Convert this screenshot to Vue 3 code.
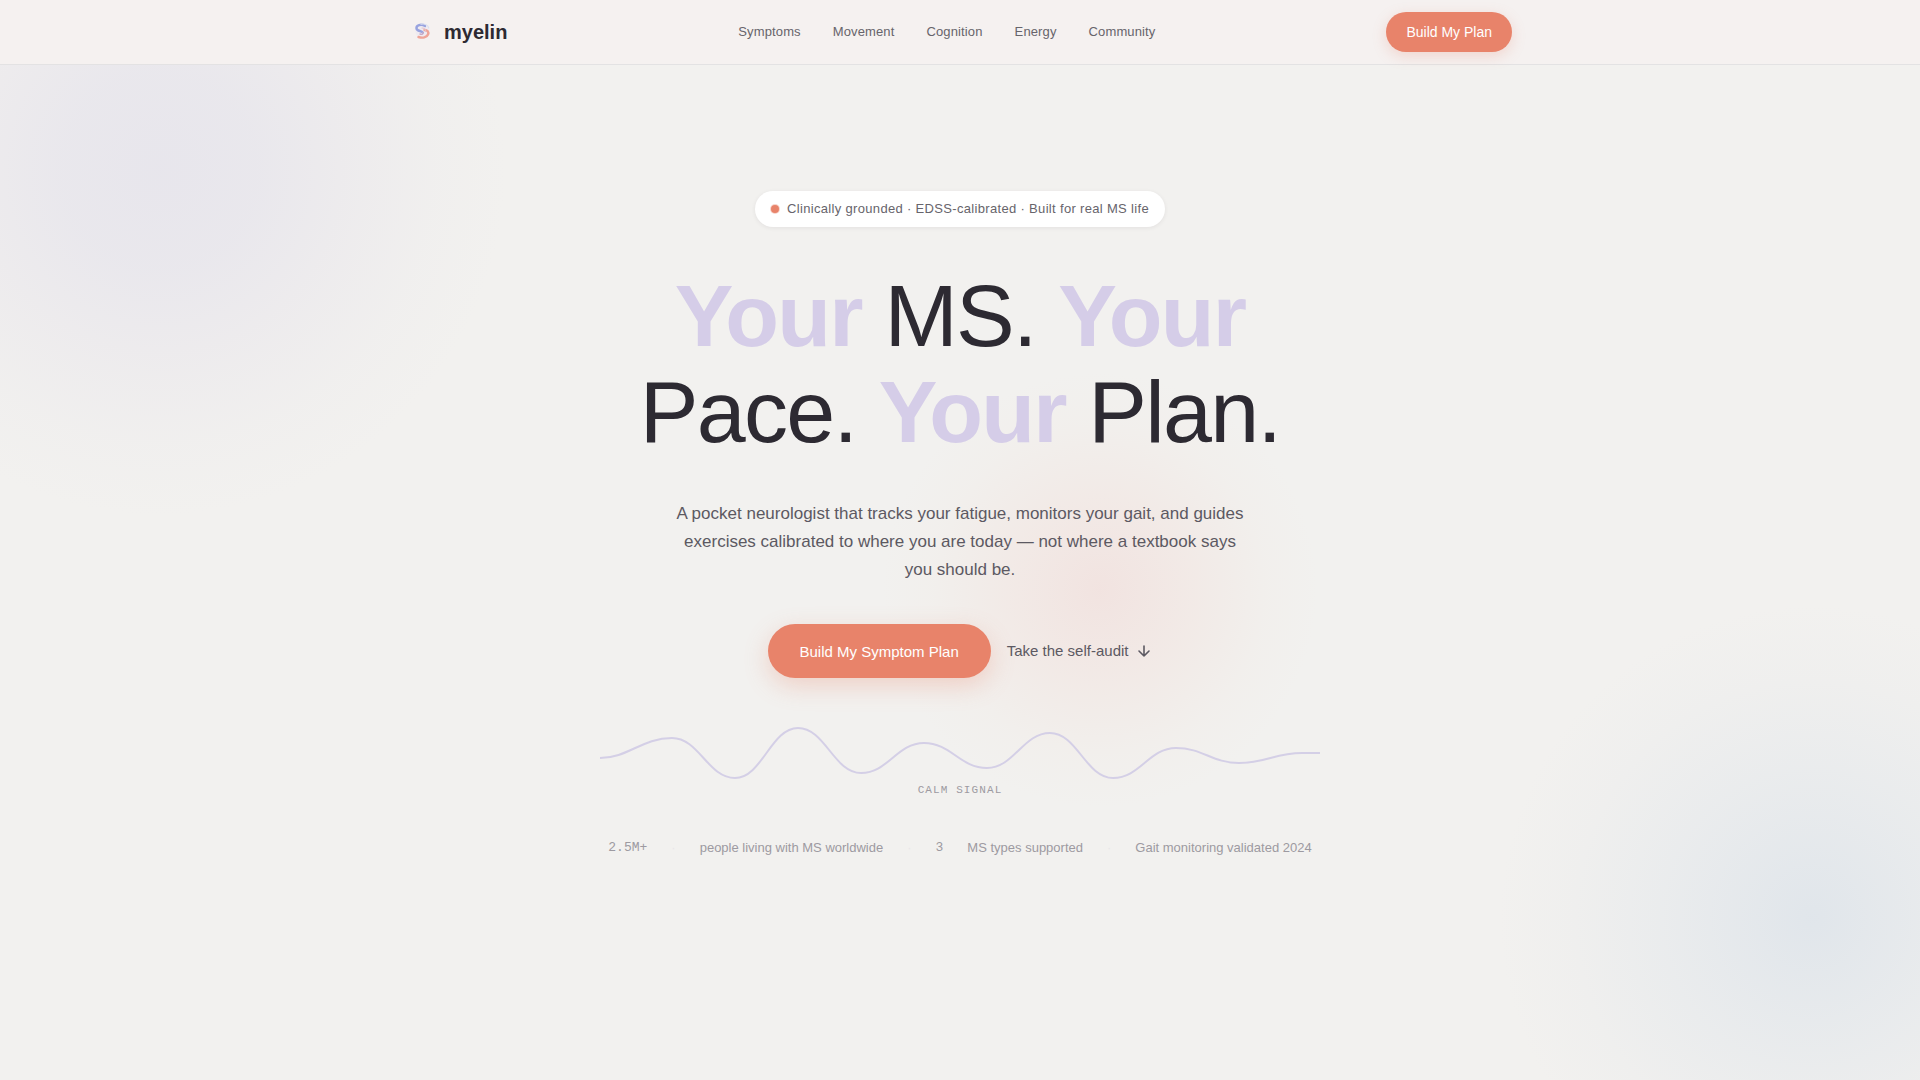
<script setup>
const links = ['Symptoms', 'Movement', 'Cognition', 'Energy', 'Community']
</script>

<template>
  <div class="page">
    <div class="glow glow-lilac" aria-hidden="true"></div>
    <div class="glow glow-coral" aria-hidden="true"></div>
    <div class="glow glow-blue" aria-hidden="true"></div>

    <header class="topbar">
      <div class="topbar-inner">
        <a class="brand" href="#">
          <svg class="logo" viewBox="0 0 28 28" fill="none" stroke-linecap="round" aria-hidden="true">
            <circle cx="14.5" cy="13.5" r="7" fill="#efebf1" />
            <path d="M17 8C13 5.5 8 7.5 8.5 10.5C9 13.5 13.5 12.5 14.8 14.6" stroke="#98a3df" stroke-width="2.4" />
            <path d="M16.5 12C19.5 12 21 14 20 16.5C18.8 19.5 14.5 20.3 10.5 19" stroke="#efa598" stroke-width="2.4" />
            <path d="M14.8 14.6C15.6 16.2 13.8 16.9 12 16" stroke="#c9a9c4" stroke-width="1.4" />
            <path d="M14 10C16 10 17.6 11.4 17.6 13.4" stroke="#e4c3cc" stroke-width="1.2" />
            <path d="M13 6.2C17 5.5 20 7.5 20.8 10" stroke="#dadff0" stroke-width="1.2" />
          </svg>
          <span>myelin</span>
        </a>
        <nav class="links" aria-label="Main">
          <a v-for="link in links" :key="link" :href="'#' + link.toLowerCase()">{{ link }}</a>
        </nav>
        <button class="cta cta-small" type="button">Build My Plan</button>
      </div>
    </header>

    <main class="hero">
      <p class="badge"><span class="dot"></span>Clinically grounded · EDSS-calibrated · Built for real MS life</p>
      <h1><strong>Your</strong> MS. <strong>Your</strong> Pace. <strong>Your</strong> Plan.</h1>
      <p class="lead">
        A pocket neurologist that tracks your fatigue, monitors your gait, and guides exercises
        calibrated to where you are today — not where a textbook says you should be.
      </p>
      <div class="actions">
        <button class="cta cta-large" type="button">Build My Symptom Plan</button>
        <a class="audit" href="#audit">
          Take the self-audit
          <svg viewBox="0 0 16 16" fill="none" stroke="currentColor" stroke-width="1.6" stroke-linecap="round" stroke-linejoin="round" aria-hidden="true">
            <path d="M8 3v10M3 8l5 5 5-5" />
          </svg>
        </a>
      </div>
      <figure class="signal">
        <svg viewBox="0 0 720 60" fill="none" aria-hidden="true">
          <path
            d="M0 38C28 38 42 18 72 18C99 18 108 58 135 58C162 58 171 8 198 8C225 8 234 53 261 53C288 53 297 23 324 23C351 23 360 48 387 48C414 48 423 13 450 13C477 13 486 58 513 58C540 58 549 28 576 28C603 28 612 43 639 43C666 43 675 33 702 33H720"
            stroke="#d4cfe6" stroke-width="2" />
        </svg>
        <figcaption>CALM SIGNAL</figcaption>
      </figure>
      <ul class="facts">
        <li class="mono">2.5M+</li>
        <li class="sep">·</li>
        <li>people living with MS worldwide</li>
        <li class="sep">·</li>
        <li class="mono">3</li>
        <li>MS types supported</li>
        <li class="sep">·</li>
        <li>Gait monitoring validated 2024</li>
      </ul>
    </main>
  </div>
</template>

<style>
body {
  margin: 0;
  background: #f2f1ef;
}
</style>

<style scoped>
.page {
  position: relative;
  min-height: 100vh;
  overflow: hidden;
  background: #f2f1ef;
  color: #2d2a32;
  font-family: "Liberation Sans", Arial, sans-serif;
}
.glow {
  position: absolute;
  border-radius: 50%;
}
.glow-lilac {
  top: -180px;
  left: -190px;
  width: 700px;
  height: 700px;
  background: radial-gradient(circle, rgba(213, 210, 231, 0.36), rgba(213, 210, 231, 0.3) 20%, rgba(216, 210, 229, 0.18) 38%, rgba(216, 212, 228, 0.06) 56%, transparent 70%);
}
.glow-coral {
  top: 370px;
  left: calc(50% - 80px);
  width: 440px;
  height: 440px;
  background: radial-gradient(circle, rgba(240, 195, 190, 0.3), rgba(242, 205, 195, 0.18) 32%, rgba(242, 213, 198, 0.06) 54%, transparent 70%);
}
.glow-blue {
  right: -208px;
  bottom: -154px;
  width: 632px;
  height: 632px;
  background: radial-gradient(circle, rgba(200, 214, 229, 0.42), rgba(200, 214, 229, 0.2) 32%, rgba(204, 214, 226, 0.07) 54%, transparent 70%);
}
.topbar {
  position: relative;
  background: #f5f1f0;
  border-bottom: 1px solid #e3e2e3;
}
.topbar-inner {
  display: flex;
  align-items: center;
  justify-content: space-between;
  max-width: 1104px;
  height: 64px;
  margin: 0 auto;
}
.brand {
  display: flex;
  align-items: center;
  gap: 8px;
  color: #2d2a32;
  font-size: 20px;
  font-weight: 700;
  text-decoration: none;
}
.logo {
  width: 28px;
  height: 28px;
}
.links {
  display: flex;
  gap: 32px;
}
.links a {
  color: #67646b;
  font-size: 13px;
  line-height: 20px;
  letter-spacing: 0.01em;
  text-decoration: none;
}
.cta {
  border: 0;
  border-radius: 99px;
  background: #e8836a;
  color: #fff;
  font-family: inherit;
}
.cta-small {
  height: 40px;
  padding: 0 20px;
  font-size: 14px;
  box-shadow: 0 4px 14px rgba(232, 131, 106, 0.25);
}
.cta-large {
  height: 54px;
  padding: 0 32px;
  font-size: 15px;
  box-shadow: 0 8px 24px rgba(232, 131, 106, 0.3);
}
.hero {
  position: relative;
  display: flex;
  flex-direction: column;
  align-items: center;
  padding: 126px 24px 0;
}
.badge {
  display: flex;
  align-items: center;
  gap: 8px;
  margin: 0;
  padding: 8px 16px;
  border-radius: 18px;
  background: #fff;
  box-shadow: 0 1px 4px rgba(45, 42, 50, 0.08);
  color: #67646b;
  font-size: 13px;
  line-height: 20px;
  letter-spacing: 0.025em;
}
.dot {
  width: 8px;
  height: 8px;
  border-radius: 50%;
  background: #e8836a;
  box-shadow: 0 0 0 1px #f8d5cc;
}
h1 {
  max-width: 720px;
  margin: 41px 0 0;
  font-size: 88px;
  font-weight: 400;
  line-height: 96px;
  letter-spacing: -0.02em;
  text-align: center;
}
h1 strong {
  color: #d5cde8;
  font-weight: 700;
}
.lead {
  max-width: 580px;
  margin: 40px 0 0;
  color: #5c5962;
  font-size: 17px;
  line-height: 28px;
  text-align: center;
}
.actions {
  display: flex;
  align-items: center;
  gap: 16px;
  margin-top: 40px;
}
.audit {
  display: flex;
  align-items: center;
  gap: 8px;
  color: #5c5962;
  font-size: 15px;
  line-height: 24px;
  text-decoration: none;
}
.audit svg {
  width: 16px;
  height: 16px;
}
.signal {
  width: 100%;
  max-width: 720px;
  margin: 42px 0 0;
  text-align: center;
}
.signal svg {
  display: block;
  width: 100%;
}
.signal figcaption {
  margin-top: 4px;
  color: #9d9aa1;
  font-family: "Liberation Mono", monospace;
  font-size: 11px;
  line-height: 12px;
  letter-spacing: 0.1em;
}
.facts {
  display: flex;
  align-items: center;
  gap: 24px;
  margin: 42px 0 0;
  padding: 0;
  color: #9d9aa1;
  font-size: 13px;
  line-height: 20px;
  list-style: none;
}
.mono {
  font-family: "Liberation Mono", monospace;
}
.sep {
  color: #e9e7e9;
}
</style>
